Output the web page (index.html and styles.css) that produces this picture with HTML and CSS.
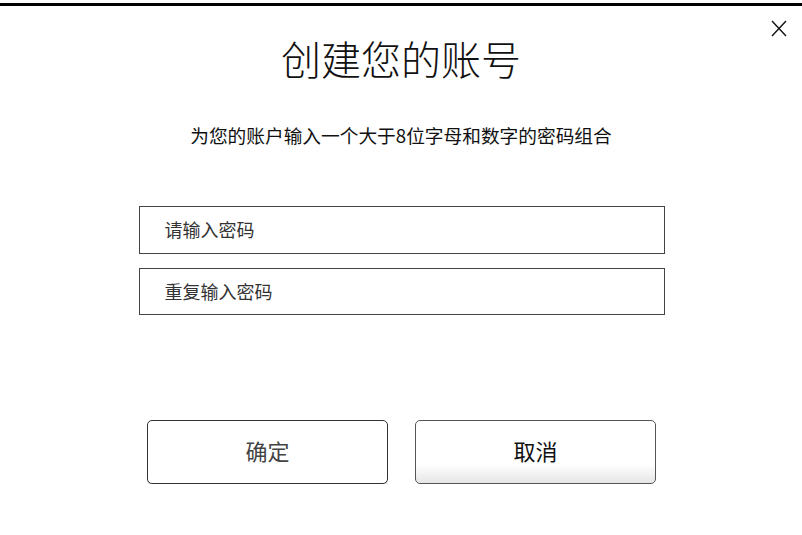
FILE: index.html
```html
<!DOCTYPE html>
<html lang="zh-CN">
<head>
<meta charset="utf-8">
<title>创建您的账号</title>
<link rel="stylesheet" href="styles.css">
</head>
<body>
<div class="topbar"></div>
<div class="dialog">
  <button class="close" aria-label="关闭">
    <svg width="16" height="17" viewBox="0 0 16 17"><path d="M1 1 L15 16 M15 1 L1 16" stroke="#111" stroke-width="1.4" fill="none"/></svg>
  </button>
  <h1 class="title">创建您的账号</h1>
  <p class="subtitle">为您的账户输入一个大于8位字母和数字的密码组合</p>
  <div class="fields">
    <div class="field first">请输入密码</div>
    <div class="field second">重复输入密码</div>
  </div>
  <div class="actions">
    <button class="btn confirm">确定</button>
    <button class="btn cancel">取消</button>
  </div>
</div>
</body>
</html>
```
FILE: styles.css
```css
html, body {
  margin: 0;
  padding: 0;
  background: #fff;
}
body {
  font-family: "Noto Sans CJK SC", "Noto Sans", sans-serif;
  color: #111;
}
.topbar {
  height: 3px;
  margin-top: 3px;
  background: #000;
}
.dialog {
  position: relative;
  display: flex;
  flex-direction: column;
  align-items: center;
}
.close {
  position: absolute;
  top: 14px;
  right: 15px;
  padding: 0;
  border: 0;
  background: none;
  line-height: 0;
}
.title {
  margin: 28px 0 0;
  font-size: 40px;
  line-height: 48px;
  font-weight: 300;
  letter-spacing: 0;
}
.subtitle {
  margin: 42px 0 0;
  font-size: 18.7px;
  line-height: 22px;
  font-weight: 400;
}
.fields {
  margin-top: 60px;
  display: flex;
  flex-direction: column;
  gap: 14px;
  width: 526px;
  margin-left: 1px;
}
.field {
  box-sizing: border-box;
  border: 1px solid #444;
  padding-left: 25px;
  padding-bottom: 2px;
  font-size: 18px;
  display: flex;
  align-items: center;
  color: #333;
}
.field.first { height: 48px; }
.field.second { height: 47px; }
.actions {
  margin-top: 105px;
  display: flex;
  gap: 27px;
  margin-left: 1px;
}
.btn {
  box-sizing: border-box;
  width: 241px;
  height: 64px;
  padding: 0 0 5px;
  border: 1px solid #333;
  border-radius: 5px;
  background: #fff;
  font-family: "Noto Sans CJK SC", sans-serif;
  font-size: 22px;
  color: #111;
}
.confirm {
  color: #444;
  box-shadow: 0 2px 0 #ddd;
}
.cancel {
  border-color: #555;
  background: linear-gradient(to bottom, #fff 0%, #fff 70%, #e6e6e6 100%);
}
```
